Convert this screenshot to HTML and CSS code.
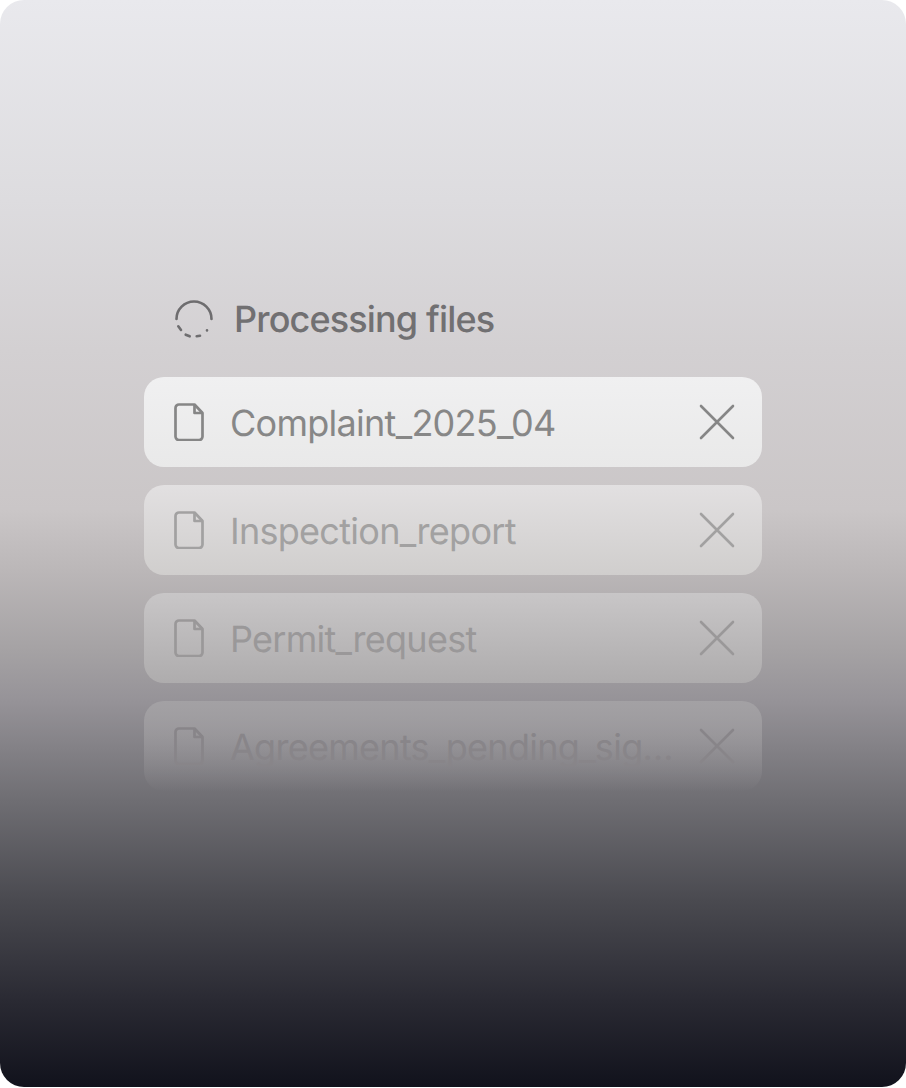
FILE: index.html
```html
<!DOCTYPE html>
<html lang="en">
<head>
    <meta charset="UTF-8">
    <meta name="viewport" content="width=device-width, initial-scale=1.0">
    <title>Processing files</title>
    <link rel="stylesheet" href="styles.css">
</head>
<body>

    <div class="panel">
        <div class="status">
            <svg class="spinner" viewBox="0 0 40 40">
                <path d="M2.500 20a17.500 17.500 0 0 1 35 0"/>
                <path d="M4.300 27.300L7 31M11.700 35.700l4 1.600M22.700 37.300l3.300-.6M33 31.300v.1"/>
            </svg>
            <h1>Processing files</h1>
        </div>

        <div class="file-list">
            <div class="file-row row-1">
                <svg class="file-icon" viewBox="0 0 30 38">
                    <path d="M5 1.500h15.500l8 8.500v23.500a3.500 3.500 0 0 1-3.500 3.500H5a3.500 3.500 0 0 1-3.500-3.500V5A3.500 3.500 0 0 1 5 1.500z"/>
                    <path d="M20.500 1.500v8.500h8"/>
                </svg>
                <span class="file-name">Complaint_2025_04</span>
                <svg class="close-icon" viewBox="0 0 36 36"><path d="M2 2l32 32M34 2L2 34"/></svg>
            </div>
            <div class="file-row row-2">
                <svg class="file-icon" viewBox="0 0 30 38">
                    <path d="M5 1.500h15.500l8 8.500v23.500a3.500 3.500 0 0 1-3.500 3.500H5a3.500 3.500 0 0 1-3.500-3.500V5A3.500 3.500 0 0 1 5 1.500z"/>
                    <path d="M20.500 1.500v8.500h8"/>
                </svg>
                <span class="file-name">Inspection_report</span>
                <svg class="close-icon" viewBox="0 0 36 36"><path d="M2 2l32 32M34 2L2 34"/></svg>
            </div>
            <div class="file-row row-3">
                <svg class="file-icon" viewBox="0 0 30 38">
                    <path d="M5 1.500h15.500l8 8.500v23.500a3.500 3.500 0 0 1-3.500 3.500H5a3.500 3.500 0 0 1-3.500-3.500V5A3.500 3.500 0 0 1 5 1.500z"/>
                    <path d="M20.500 1.500v8.500h8"/>
                </svg>
                <span class="file-name">Permit_request</span>
                <svg class="close-icon" viewBox="0 0 36 36"><path d="M2 2l32 32M34 2L2 34"/></svg>
            </div>
            <div class="file-row row-4">
                <svg class="file-icon" viewBox="0 0 30 38">
                    <path d="M5 1.500h15.500l8 8.500v23.500a3.500 3.500 0 0 1-3.500 3.500H5a3.500 3.500 0 0 1-3.500-3.500V5A3.500 3.500 0 0 1 5 1.500z"/>
                    <path d="M20.500 1.500v8.500h8"/>
                </svg>
                <span class="file-name">Agreements_pending_signature</span>
                <svg class="close-icon" viewBox="0 0 36 36"><path d="M2 2l32 32M34 2L2 34"/></svg>
            </div>
        </div>
    </div>

</body>
</html>
```

FILE: styles.css
```css
* {
    margin: 0;
    padding: 0;
    box-sizing: border-box;
}

body {
    font-family: 'Inter', 'Liberation Sans', sans-serif;
    background: #ffffff;
    text-rendering: geometricPrecision;
}

.panel {
    width: 906px;
    height: 1087px;
    border-radius: 24px;
    padding: 298px 144px 0;
    overflow: hidden;
    background: linear-gradient(180deg,
        #e9e9ed 0,
        #dddcdf 200px,
        #d3d0d2 350px,
        #cac6c7 510px,
        #bbb7b8 570px,
        #a5a2a4 650px,
        #969398 700px,
        #6f6e73 800px,
        #4a4a50 900px,
        #2a2a33 1000px,
        #11121c 1087px);
}

.status {
    display: flex;
    align-items: center;
    gap: 20px;
    height: 42px;
    padding-left: 30px;
    margin-bottom: 37px;
}

.spinner {
    width: 40px;
    height: 40px;
    fill: none;
    stroke: #6e6d6f;
    stroke-width: 2.6;
    stroke-linecap: round;
}

h1 {
    font-size: 36px;
    font-weight: 500;
    letter-spacing: -0.85px;
    color: #706f71;
    opacity: 0.99;
}

.file-list {
    display: flex;
    flex-direction: column;
    gap: 18px;
}

.file-row {
    display: flex;
    align-items: center;
    height: 90px;
    padding: 0 27px 0 30px;
    border-radius: 20px;
    color: var(--ink);
    background: linear-gradient(180deg, var(--top), var(--bottom));
}

.file-name {
    flex: 1;
    min-width: 0;
    margin: 0 22px 0 26px;
    padding-top: 2px;
    font-size: 36px;
    letter-spacing: -0.72px;
    white-space: nowrap;
    overflow: hidden;
    text-overflow: ellipsis;
    opacity: 0.99;
}

.file-icon {
    flex: none;
    width: 30px;
    height: 38px;
    fill: none;
    stroke: currentColor;
    stroke-width: 2.7;
    stroke-linejoin: round;
}

.close-icon {
    flex: none;
    width: 36px;
    height: 36px;
    fill: none;
    stroke: currentColor;
    stroke-width: 2.6;
    stroke-linecap: round;
}

.row-1 {
    --ink: #868686;
    --top: #f0f0f1;
    --bottom: #e9e9e9;
}

.row-2 {
    --ink: #a2a1a1;
    --top: #e2e0e1;
    --bottom: #d0cecd;
}

.row-3 {
    --ink: #9a9899;
    --top: #c8c6c7;
    --bottom: #aeacad;
}

.row-4 {
    --ink: #888589;
    --top: #a3a1a4;
    --bottom: rgba(120, 119, 124, 0);
}
```
